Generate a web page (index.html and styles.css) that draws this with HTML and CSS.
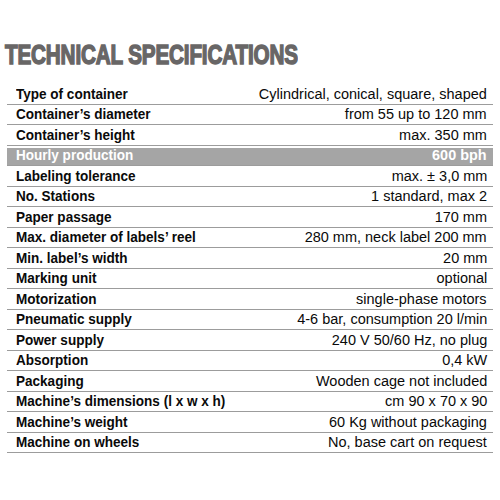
FILE: index.html
```html
<!DOCTYPE html>
<html>
<head>
<meta charset="utf-8">
<link rel="stylesheet" href="styles.css">
</head>
<body>
<div class="page">
  <h1 class="title"><span class="title-text">TECHNICAL SPECIFICATIONS</span></h1>
  <div class="specs">
    <div class="row"><span class="k">Type of container</span><span class="v">Cylindrical, conical, square, shaped</span></div>
    <div class="row"><span class="k">Container’s diameter</span><span class="v">from 55 up to 120 mm</span></div>
    <div class="row"><span class="k">Container’s height</span><span class="v">max. 350 mm</span></div>
    <div class="row hl"><span class="k">Hourly production</span><span class="v">600 bph</span></div>
    <div class="row"><span class="k">Labeling tolerance</span><span class="v">max. ± 3,0 mm</span></div>
    <div class="row"><span class="k">No. Stations</span><span class="v">1 standard, max 2</span></div>
    <div class="row"><span class="k">Paper passage</span><span class="v">170 mm</span></div>
    <div class="row"><span class="k">Max. diameter of labels’ reel</span><span class="v">280 mm, neck label 200 mm</span></div>
    <div class="row"><span class="k">Min. label’s width</span><span class="v">20 mm</span></div>
    <div class="row"><span class="k">Marking unit</span><span class="v">optional</span></div>
    <div class="row"><span class="k">Motorization</span><span class="v">single-phase motors</span></div>
    <div class="row"><span class="k">Pneumatic supply</span><span class="v">4-6 bar, consumption 20 l/min</span></div>
    <div class="row"><span class="k">Power supply</span><span class="v">240 V 50/60 Hz, no plug</span></div>
    <div class="row"><span class="k">Absorption</span><span class="v">0,4 kW</span></div>
    <div class="row"><span class="k">Packaging</span><span class="v">Wooden cage not included</span></div>
    <div class="row"><span class="k">Machine’s dimensions (l x w x h)</span><span class="v">cm 90 x 70 x 90</span></div>
    <div class="row"><span class="k">Machine’s weight</span><span class="v">60 Kg without packaging</span></div>
    <div class="row"><span class="k">Machine on wheels</span><span class="v">No, base cart on request</span></div>
  </div>
</div>
</body>
</html>
```
FILE: styles.css
```css
html, body {
  margin: 0;
  padding: 0;
  background: #ffffff;
}
.page {
  width: 500px;
  height: 500px;
  padding: 40px 0 0 7px;
  box-sizing: border-box;
  font-family: "Liberation Sans", Arial, sans-serif;
}
.title {
  margin: 0 0 13px -2px;
  font-weight: bold;
  font-size: 27px;
  line-height: 31px;
  color: #686666;
  white-space: nowrap;
}
.title-text {
  display: inline-block;
  transform: scaleX(0.765);
  transform-origin: left center;
  -webkit-text-stroke: 1.5px #686666;
  letter-spacing: -0.2px;
}
.specs {
  width: 486px;
  display: flex;
  flex-direction: column;
}
.row {
  display: flex;
  justify-content: space-between;
  align-items: center;
  height: 20.5px;
  box-sizing: border-box;
  border-bottom: 1px solid #9c9c9c;
  padding: 0 6px 0 9px;
  font-size: 15.5px;
  line-height: 18px;
  color: #0a0a0a;
  white-space: nowrap;
}
.k {
  display: inline-block;
  font-weight: bold;
  transform: scaleX(0.873);
  transform-origin: left center;
}
.v {
  display: inline-block;
  font-weight: normal;
  transform: scaleX(0.935);
  transform-origin: right center;
}
.row.hl {
  background: #a5a5a5;
  color: #ffffff;
  box-shadow: inset 0 2px 0 #ffffff;
}
.row.hl .v {
  font-weight: bold;
  transform: scaleX(0.93);
}
```
